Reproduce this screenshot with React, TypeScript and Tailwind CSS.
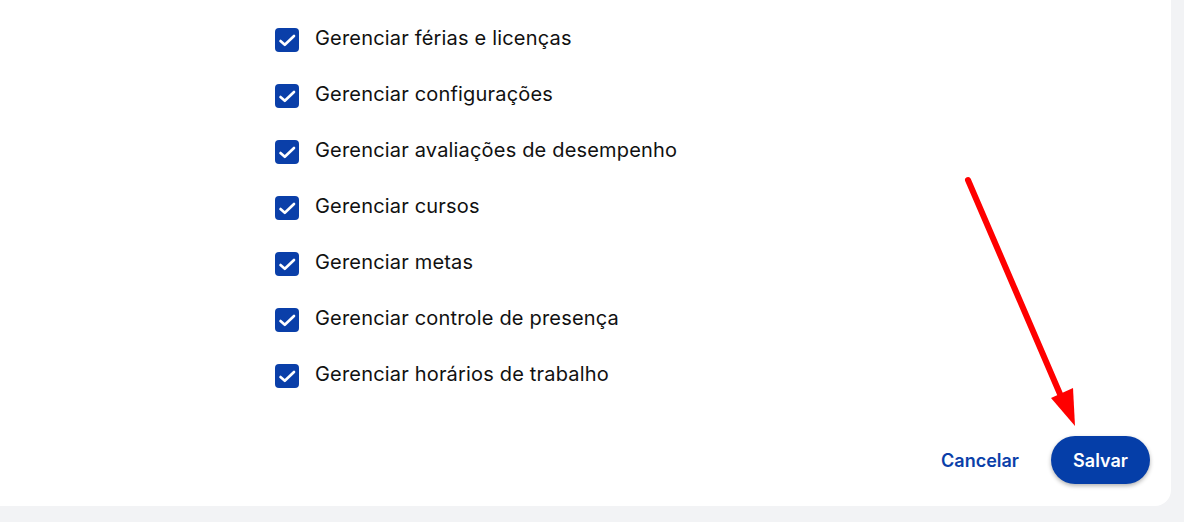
import React from "react";

const items = [
  "Gerenciar férias e licenças",
  "Gerenciar configurações",
  "Gerenciar avaliações de desempenho",
  "Gerenciar cursos",
  "Gerenciar metas",
  "Gerenciar controle de presença",
  "Gerenciar horários de trabalho",
];

function Check() {
  return (
    <span className="flex h-6 w-6 shrink-0 items-center justify-center rounded-[4px] bg-[#0a3fa9]">
      <svg width="24" height="24" viewBox="0 0 24 24" fill="none">
        <path d="M5.5 13L9.8 16.8L19 8" stroke="white" strokeWidth="2.6" strokeLinecap="round" strokeLinejoin="round" />
      </svg>
    </span>
  );
}

export default function App() {
  return (
    <div className="relative h-[522px] w-[1184px] overflow-hidden bg-[#f2f3f5]" style={{ fontFamily: "Inter, 'Noto Sans', sans-serif" }}>
      <div className="flex w-[1171px] flex-col rounded-br-2xl bg-white">
        <div className="flex flex-col gap-8 pl-[275px] pt-[28px]">
          {items.map((t) => (
            <label key={t} className="flex h-6 items-center gap-4">
              <Check />
              <span className="mb-[5px] text-[20px] leading-6 tracking-[0.18px] text-[#111]">{t}</span>
            </label>
          ))}
        </div>
        <div className="flex items-center justify-end gap-8 pb-[22px] pr-[21px] pt-[48px]">
          <button className="text-[18px] font-semibold text-[#0a3fa9]">Cancelar</button>
          <button className="h-12 w-[99px] rounded-full bg-[#053ea8] text-[18px] font-semibold text-white shadow-[0_2px_4px_rgba(0,0,0,0.3)]">
            Salvar
          </button>
        </div>
      </div>
      <svg className="pointer-events-none absolute left-0 top-0" width="1184" height="522">
        <line x1="968" y1="180" x2="1060" y2="394" stroke="#ff0000" strokeWidth="6" strokeLinecap="round" />
        <polygon points="1051,398 1073,388 1075,426" fill="#ff0000" />
      </svg>
    </div>
  );
}
